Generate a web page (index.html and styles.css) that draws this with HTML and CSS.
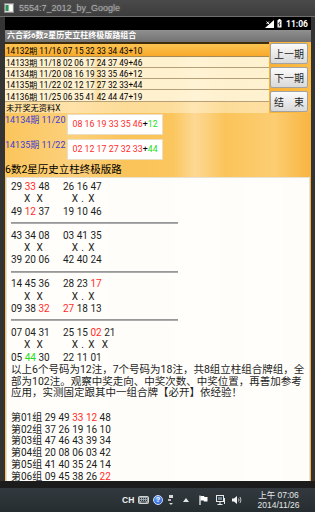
FILE: index.html
```html
<!DOCTYPE html>
<html lang="zh-CN">
<head>
<meta charset="utf-8">
<title>5554:7_2012_by_Google</title>
<link rel="stylesheet" href="styles.css">
</head>
<body>
<div class="win">
  <header class="wtitle">
    <svg class="wicon" width="10" height="10" viewBox="0 0 10 10"><rect x="0.5" y="0.5" width="9" height="9" fill="#dcdcdc" stroke="#8a8a8a"/><rect x="1.5" y="2" width="3" height="6" fill="#2b8f52"/><rect x="5.5" y="2" width="3" height="6" fill="#ffffff"/></svg>
    <span class="wname">5554:7_2012_by_Google</span>
  </header>
  <div class="frame">
    <div class="screen">
      <div class="status">
        <svg class="sig" width="9" height="8" viewBox="0 0 9 8"><polygon points="0,8 9,8 9,0" fill="#fff"/><path d="M1.5 1.5 L4 4 M4 1.5 L1.5 4" stroke="#fff" stroke-width="1"/></svg>
        <svg class="bat" width="5" height="9" viewBox="0 0 5 9"><rect x="1.5" y="0" width="2" height="1" fill="#fff"/><rect x="0.5" y="1" width="4" height="7.5" fill="#fff"/><path d="M3 2.5 L1.5 5 L3 5 L2 7.5" stroke="#000" stroke-width="0.8" fill="none"/></svg>
        <span class="clock">11:06</span>
      </div>
      <div class="apptitle">六合彩6数2星历史立柱终极版路组合</div>
      <main class="app">
        <section class="top">
          <div class="list">
            <div class="row sel">14132期 11/16 07 15 32 33 34 43+10</div>
            <div class="row">14133期 11/18 02 06 17 24 37 49+46</div>
            <div class="row">14134期 11/20 08 16 19 33 35 46+12</div>
            <div class="row">14135期 11/22 02 12 17 27 32 33+44</div>
            <div class="row">14136期 11/25 06 35 41 42 44 47+19</div>
            <div class="row none">未开奖无资料X</div>
          </div>
          <div class="btns">
            <button class="btn">上一期</button>
            <button class="btn">下一期</button>
            <button class="btn">结　束</button>
          </div>
        </section>
        <div class="res">
          <span class="lbl">14134期 11/20</span>
          <span class="box">08 16 19 33 35 46<span class="plus">+</span><span class="grn">12</span></span>
        </div>
        <div class="res">
          <span class="lbl">14135期 11/22</span>
          <span class="box">02 12 17 27 32 33<span class="plus">+</span><span class="grn">44</span></span>
        </div>
        <div class="heading">6数2星历史立柱终极版路</div>
        <div class="panel">
          <div class="grp">
            <div class="ln"><span class="c">29 <span class="red">33</span> 48</span><span>26 16 47</span></div>
            <div class="ln"><span class="c"><span class="x xa">X</span><span class="x xb">X</span></span><span class="x xd">X</span><span class="dot">.</span><span class="x xe">X</span></div>
            <div class="ln"><span class="c">49 <span class="red">12</span> 37</span><span>19 10 46</span></div>
          </div>
          <div class="hr"></div>
          <div class="grp">
            <div class="ln"><span class="c">43 34 08</span><span>03 41 35</span></div>
            <div class="ln"><span class="c"><span class="x xa">X</span><span class="x xb">X</span></span><span class="x xd">X</span><span class="dot">.</span><span class="x xe">X</span></div>
            <div class="ln"><span class="c">39 20 06</span><span>42 40 24</span></div>
          </div>
          <div class="hr"></div>
          <div class="grp">
            <div class="ln"><span class="c">14 45 36</span><span>28 23 <span class="red">17</span></span></div>
            <div class="ln"><span class="c"><span class="x xa">X</span><span class="x xb">X</span></span><span class="x xd">X</span><span class="dot">.</span><span class="x xe">X</span></div>
            <div class="ln"><span class="c">09 38 <span class="red">32</span></span><span><span class="red">27</span> 18 13</span></div>
          </div>
          <div class="hr"></div>
          <div class="grp">
            <div class="ln"><span class="c">07 04 31</span><span>25 15 <span class="red">02</span> 21</span></div>
            <div class="ln"><span class="c"><span class="x xa">X</span><span class="x xb">X</span></span><span class="x xd">X</span><span class="dot">.</span><span class="x xe">X</span><span class="x xf">X</span></div>
            <div class="ln"><span class="c">05 <span class="grn">44</span> 30</span><span>22 11 01</span></div>
          </div>
          <p class="para">以上6个号码为12注，7个号码为18注，共8组立柱组合牌组，全部为102注。观察中奖走向、中奖次数、中奖位置，再善加参考应用，实测固定跟其中一组合牌【必开】依经验！</p>
          <div class="sets">
            <div class="set">第01组 29 49 <span class="red">33 12</span> 48</div>
            <div class="set">第02组 37 26 19 16 10</div>
            <div class="set">第03组 47 46 43 39 34</div>
            <div class="set">第04组 20 08 06 03 42</div>
            <div class="set">第05组 41 40 35 24 14</div>
            <div class="set">第06组 09 45 38 26 <span class="red">22</span></div>
          </div>
        </div>
      </main>
    </div>
  </div>
  <div class="below"></div>
  <footer class="taskbar">
    <span class="t-ch">CH</span>
    <svg class="t-kb" width="11" height="8" viewBox="0 0 11 8"><rect x="0.5" y="0.5" width="10" height="7" rx="1" fill="#9aa3a8" stroke="#d0d4d6"/><path d="M2 2.5h1M4 2.5h1M6 2.5h1M8 2.5h1M2 4.5h1M4 4.5h1M6 4.5h1M8 4.5h1M3 6h5" stroke="#2a3136" stroke-width="1"/></svg>
    <span class="t-help">?</span>
    <svg class="t-net" width="6" height="10" viewBox="0 0 6 10"><rect x="1" y="0" width="4" height="3" fill="#d8d8d8"/><rect x="0" y="4" width="3" height="2" fill="#b8b8b8"/><polygon points="1,8 5,8 3,10" fill="#d8d8d8"/></svg>
    <svg class="t-up" width="6" height="4" viewBox="0 0 6 4"><polygon points="0,4 6,4 3,0" fill="#e6e6e6"/></svg>
    <svg class="t-flag" width="9" height="10" viewBox="0 0 9 10"><path d="M1 0.5 V10" stroke="#fff" stroke-width="1.2"/><path d="M1.5 1 H5 L5.5 2 H8.5 V6.5 H5 L4.5 5.5 H1.5 Z" fill="#fff"/></svg>
    <svg class="t-mon" width="10" height="10" viewBox="0 0 10 10"><rect x="0.5" y="0.5" width="7" height="6" fill="none" stroke="#e8e8e8"/><rect x="2" y="2" width="4" height="3" fill="#6d8797"/><path d="M4 7v2M1.5 9.5h5M8.5 3v6" stroke="#e8e8e8"/></svg>
    <svg class="t-spk" width="10" height="10" viewBox="0 0 10 10"><polygon points="0,3.5 2,3.5 5,1 5,9 2,6.5 0,6.5" fill="#f2f2f2"/><path d="M6.5 3.5 Q7.6 5 6.5 6.5 M8 2 Q10 5 8 8" stroke="#cfcfcf" fill="none" stroke-width="0.9"/></svg>
    <div class="t-clock"><span>上午 07:06</span><span>2014/11/26</span></div>
  </footer>
</div>
</body>
</html>
```

FILE: styles.css
```css
* { box-sizing: border-box; margin: 0; padding: 0; }
html, body { width: 315px; height: 512px; overflow: hidden; }
body {
  background: #2d2d2d;
  font-family: Roboto, "Noto Sans CJK SC", sans-serif;
  color: #000;
}
.win { display: flex; flex-direction: column; height: 512px; }

.wtitle {
  flex: none;
  height: 17px;
  display: flex;
  align-items: center;
  gap: 5px;
  padding: 0 0 1px 4px;
  background: linear-gradient(#4a4a4a, #3c3c3c);
  border-bottom: 1px solid #6e6e6e;
  font-family: "Liberation Sans", sans-serif;
  font-size: 9px;
  color: #b0b0b0;
  text-shadow: 0 0 3px rgba(255, 255, 255, .25);
}
.wicon { flex: none; }

.frame {
  flex: none;
  height: 464px;
  padding: 0 4px 0 5px;
  background: #343434;
}
.screen {
  height: 100%;
  display: flex;
  flex-direction: column;
  overflow: hidden;
  background: #000;
}

.status {
  flex: none;
  height: 13px;
  display: flex;
  align-items: center;
  justify-content: flex-end;
  gap: 3px;
  padding-right: 3px;
  background: #000;
  color: #fff;
}
.clock { font-size: 8.5px; font-weight: bold; margin-left: 1px; }

.apptitle {
  flex: none;
  height: 12px;
  line-height: 12px;
  padding-left: 2px;
  background: linear-gradient(#909090, #727272);
  color: #fff;
  font-size: 8px;
  font-weight: bold;
  white-space: nowrap;
}

.app {
  flex: 1;
  min-height: 0;
  display: flex;
  flex-direction: column;
  background: linear-gradient(90deg, #fbc55c 0%, #fcd07c 22%, #fbc358 40%, #fbc65e 55%, #fdd894 62%, #fbc45a 72%, #fccd72 88%, #f8b440 100%);
}

.top { flex: none; display: flex; }
.list { flex: 1; border-top: 2px solid #3f2d0c; }
.row {
  height: 11.3px;
  display: flex;
  align-items: center;
  padding-left: 1px;
  font-size: 8.2px;
  white-space: nowrap;
  background: linear-gradient(90deg, rgba(255, 247, 222, .88) 0%, rgba(255, 247, 222, .88) 33%, rgba(252, 228, 170, .85) 35%, rgba(255, 247, 222, .88) 37%, rgba(255, 247, 222, .88) 100%);
  border-bottom: 1px solid #b7a078;
}
.row.sel {
  height: 12.5px;
  background: linear-gradient(#fcc451, #f8a92b);
  border-bottom-color: #a88a55;
}
.row.none { border-bottom: 0; background: rgba(255, 240, 205, .55); }

.btns {
  flex: none;
  width: 42px;
  display: flex;
  flex-direction: column;
  gap: 3.7px;
  padding: 1px 3px 0 1px;
  background: linear-gradient(90deg, #f8b035, #fbbd48);
}
.btn {
  height: 20.5px;
  font-family: inherit;
  font-size: 10px;
  color: #1e1e1e;
  background: linear-gradient(#fbfbfb, #d9d9d9);
  border: 1px solid #a2a2a2;
  border-radius: 2px;
}

.res { flex: none; display: flex; gap: 2px; margin-top: 1px; }
.res + .res { margin-top: 4px; }
.lbl {
  font-size: 9px;
  line-height: 11px;
  padding-top: 1px;
  color: #3c3cd2;
  white-space: nowrap;
}
.box {
  height: 21px;
  display: flex;
  align-items: center;
  padding: 0 4px;
  background: #fff;
  border: 1px solid #eadfc6;
  font-size: 8.8px;
  color: #ff2b2b;
  white-space: nowrap;
}
.plus { color: #000; }
.grn { color: #22dd22; }
.red { color: #ff2b2b; }

.heading {
  flex: none;
  margin-top: 3px;
  height: 14px;
  line-height: 14px;
  font-size: 10.5px;
  white-space: nowrap;
}

.panel {
  flex: 1;
  min-height: 0;
  margin: 0 1px;
  padding: 3.2px 2px 0 4px;
  background: rgba(255, 255, 255, .97);
  border: 1px solid #e8e2d6;
  border-bottom: 0;
  font-size: 10px;
  line-height: 12.3px;
  color: #1e1e1e;
}
.ln { display: flex; white-space: nowrap; }
.c { display: inline-block; width: 52px; flex: none; }
.x { display: inline-block; width: 6px; text-align: center; }
.dot { display: inline-block; width: 4px; text-align: center; margin-left: 3px; }
.xa { margin-left: 13px; }
.xb { margin-left: 6.5px; }
.xd { margin-left: 8.7px; }
.xe { margin-left: 3.6px; }
.xf { margin-left: 7.4px; }

.hr {
  width: 167px;
  height: 2px;
  margin: 4.2px 0 5.5px;
  background: linear-gradient(#8e8e8e, #b4b4b4);
}

.para {
  font-size: 10.5px;
  line-height: 11.5px;
  margin-top: 0.5px;
  margin-bottom: 13px;
}
.set { line-height: 11.8px; white-space: nowrap; }

.below { flex: none; height: 7px; background: #1c1c1c; }

.taskbar {
  flex: 1;
  display: flex;
  align-items: center;
  padding-left: 122px;
  background: linear-gradient(#323a3f, #262d31);
  color: #fff;
}
.t-ch {
  width: 11px;
  font-family: "Liberation Sans", sans-serif;
  font-size: 8.5px;
  font-weight: bold;
  color: #f0f0f0;
}
.t-kb { margin-left: 5px; }
.t-help {
  margin-left: 4px;
  width: 10px;
  height: 10px;
  border-radius: 50%;
  background: radial-gradient(circle at 40% 35%, #6fa8ff, #1a4fc8);
  border: 1px solid #cfe0ff;
  color: #fff;
  font-family: "Liberation Sans", sans-serif;
  font-size: 7.5px;
  font-weight: bold;
  line-height: 8px;
  text-align: center;
}
.t-net { margin-left: 5px; }
.t-up { margin-left: 9px; }
.t-flag { margin-left: 10px; }
.t-mon { margin-left: 8px; }
.t-spk { margin-left: 6px; }
.t-clock {
  margin-left: 12px;
  width: 49px;
  display: flex;
  flex-direction: column;
  align-items: center;
  font-family: "Liberation Sans", "Noto Sans CJK SC", sans-serif;
  font-size: 8.5px;
  line-height: 10px;
  color: #e6e6e6;
}
```
